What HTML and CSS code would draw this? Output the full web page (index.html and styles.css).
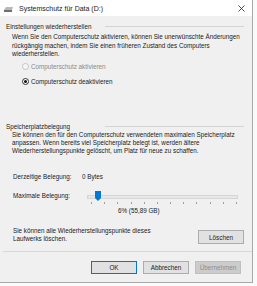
FILE: index.html
```html
<!DOCTYPE html>
<html lang="de">
<head>
  <meta charset="UTF-8">
  <meta name="viewport" content="width=device-width, initial-scale=1.0">
  <title>Systemschutz für Data (D:)</title>
  <link rel="stylesheet" href="styles.css">
</head>
<body>

<div class="window">
  <div class="titlebar">
    <svg class="drive-icon" width="9" height="5" viewBox="0 0 9 5">
      <polygon points="2,0 9,0 8,3 0,3" fill="#b8b8b8"/>
      <polygon points="0,3 8,3 8,5 0,5" fill="#707070"/>
    </svg>
    <span class="title">Systemschutz für Data (D:)</span>
    <svg class="close" width="7" height="7" viewBox="0 0 7 7">
      <path d="M0.5 0.5 L6.5 6.5 M6.5 0.5 L0.5 6.5" stroke="#222" stroke-width="0.8"/>
    </svg>
  </div>

  <div class="content">
    <div class="group-head">
      <span>Einstellungen wiederherstellen</span>
      <span class="group-line"></span>
    </div>
    <p class="text">Wenn Sie den Computerschutz aktivieren, können Sie unerwünschte Änderungen rückgängig machen, indem Sie einen früheren Zustand des Computers wiederherstellen.</p>

    <div class="radios">
      <div class="radio disabled"><span class="dot"></span>Computerschutz aktivieren</div>
      <div class="radio checked"><span class="dot"></span>Computerschutz deaktivieren</div>
    </div>

    <div class="group-head second">
      <span>Speicherplatzbelegung</span>
      <span class="group-line"></span>
    </div>
    <p class="text">Sie können den für den Computerschutz verwendeten maximalen Speicherplatz anpassen. Wenn bereits viel Speicherplatz belegt ist, werden ältere Wiederherstellungspunkte gelöscht, um Platz für neue zu schaffen.</p>

    <div class="row usage">
      <span class="row-label">Derzeitige Belegung:</span>
      <span>0 Bytes</span>
    </div>

    <div class="row max">
      <span class="row-label">Maximale Belegung:</span>
      <div class="slider">
        <div class="track"></div>
        <svg class="thumb" width="6" height="10" viewBox="0 0 6 10">
          <polygon points="0,0 6,0 6,7 3,10 0,7" fill="#0078d7"/>
        </svg>
        <div class="ticks">
          <i></i><i></i><i></i><i></i><i></i><i></i><i></i><i></i><i></i><i></i><i></i><i></i>
        </div>
      </div>
    </div>

    <div class="percent">6% (55,89 GB)</div>

    <div class="delete-row">
      <p class="delete-text">Sie können alle Wiederherstellungspunkte dieses Laufwerks löschen.</p>
      <button class="btn delete">Löschen</button>
    </div>
  </div>

  <div class="separator"></div>

  <div class="buttons">
    <button class="btn default">OK</button>
    <button class="btn">Abbrechen</button>
    <button class="btn" disabled>Übernehmen</button>
  </div>
</div>

</body>
</html>
```

FILE: styles.css
```css
body { margin: 0; background: #fafafa; font-family: "Liberation Sans", Arial, sans-serif; font-size: 6.3px; color: #1a1a1a; }

.window { width: 253px; height: 283px; background: #f0f0f0; border-right: 1px solid #a8a8a8; border-bottom: 1px solid #a8a8a8; box-sizing: border-box; display: flex; flex-direction: column; }

.titlebar { height: 16px; flex: none; background: #fff; display: flex; align-items: center; padding: 0 7px 0 4px; }
.drive-icon { margin-top: 2px; }
.title { margin-left: 6px; font-size: 7px; color: #222; }
.close { margin-left: auto; }

.content { padding: 0 6px 0 6px; }

.group-head { display: grid; grid-template-columns: 99px 1fr; align-items: center; height: 9px; margin-top: 6px; margin-right: 2px; }
.group-line { height: 1px; background: #d5d5d5; }
.group-head.second { margin-top: 36px; height: 8px; }

.text { margin: 2px 0 0 6px; line-height: 8.5px; }
.group-head.second + .text { margin-top: 0; line-height: 8.2px; }

.radios { margin: 3px 0 0 16px; display: flex; flex-direction: column; gap: 5px; }
.radio { display: flex; align-items: center; height: 10px; }
.dot { width: 7px; height: 7px; border-radius: 50%; box-sizing: border-box; margin-right: 2px; position: relative; }
.radio.disabled { color: #8a8a8a; }
.radio.disabled .dot { border: 1px solid #c4c4c4; background: #f6f6f6; }
.radio.checked .dot { border: 1px solid #333; background: #fff; }
.radio.checked .dot::after { content: ""; position: absolute; left: 1px; top: 1px; width: 3px; height: 3px; border-radius: 50%; background: #111; }

.row { display: flex; margin-left: 7px; }
.row-label { width: 69px; }
.usage { margin-top: 17px; line-height: 10px; }
.max { margin-top: 6px; height: 16px; line-height: 16px; }

.slider { position: relative; width: 151px; margin-left: 5px; }
.track { position: absolute; left: 0; right: 0; top: 7px; height: 2px; background: #e7e7e7; border: 1px solid #d6d6d6; }
.thumb { position: absolute; left: 8px; top: 3px; }
.ticks { position: absolute; left: 4px; right: 1px; top: 14px; height: 2px; display: flex; justify-content: space-between; }
.ticks i { width: 1px; height: 2px; background: #a0a0a0; }

.percent { margin-top: 2px; line-height: 10px; padding-left: 112px; }

.delete-row { display: flex; justify-content: space-between; align-items: flex-start; margin: 11px 2px 0 7px; }
.delete-text { margin: 0; width: 145px; line-height: 8px; }

.btn { font-family: inherit; font-size: 6.3px; color: #1a1a1a; width: 46px; height: 14px; padding: 0; background: #e1e1e1; border: 1px solid #adadad; }
.delete { margin-top: 3px; }
.btn.default { border: 1px solid #0078d7; }
.btn:disabled { background: #cccccc; border-color: #bfbfbf; color: #8d8d8d; }

.separator { height: 1px; flex: none; background: #d8d8d8; margin: 7px 0 0 3px; }

.buttons { display: flex; justify-content: flex-end; gap: 6px; padding-right: 11px; margin-top: 9px; }
.buttons .btn { height: 13px; }
```
